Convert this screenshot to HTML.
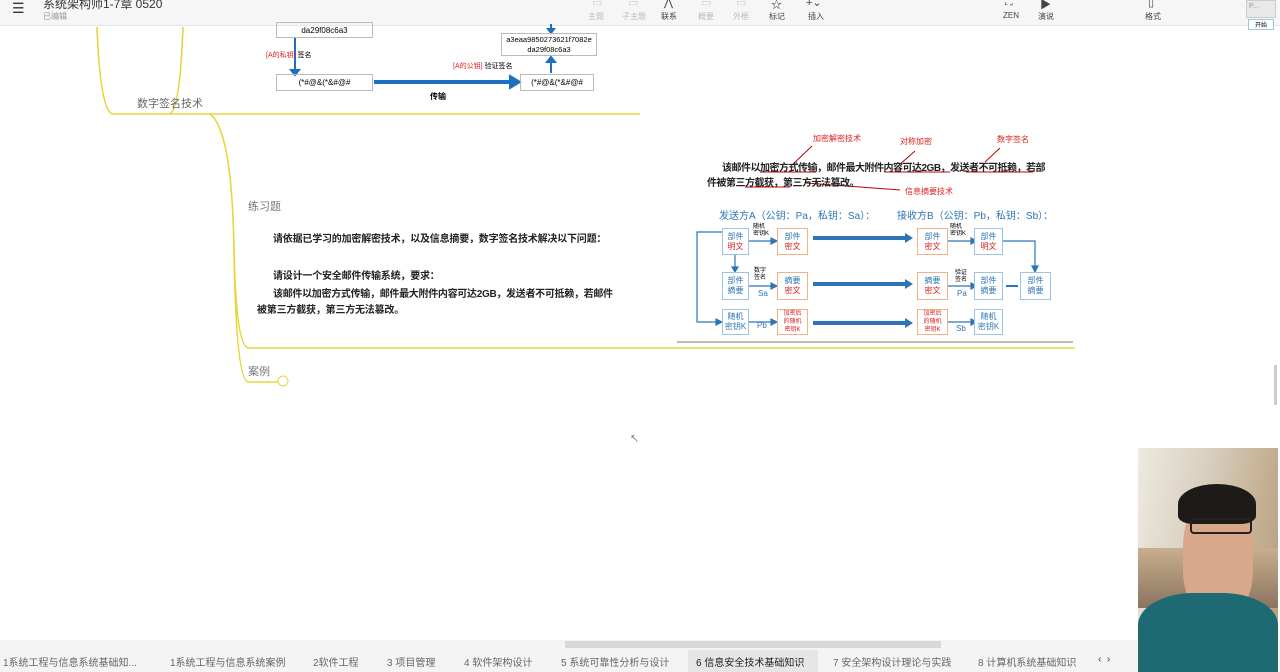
<!DOCTYPE html>
<html><head><meta charset="utf-8"><style>
*{margin:0;padding:0;box-sizing:border-box}
body{width:1280px;height:672px;overflow:hidden;background:#fff;font-family:"Liberation Sans","Noto Sans CJK SC",sans-serif;position:relative}
.a{position:absolute;white-space:nowrap}
.bx{position:absolute;border:1px solid #9dc3e6;background:#fff;font-size:8px;line-height:10px;text-align:center;color:#2e75b6;display:flex;flex-direction:column;justify-content:center}
.bx.o{border-color:#f4b183}
.r{color:#e02020}
.t{font-size:10px;color:#222;font-weight:bold}
.tab{position:absolute;top:654px;font-size:10px;color:#666}
.ic{position:absolute;top:-4px;font-size:11px;color:#444}
</style></head><body>
<div class="a" style="left:0;top:0;width:1280px;height:26px;background:#f6f6f6;border-bottom:1px solid #e6e6e6"></div>
<div class="a" style="left:12px;top:0;font-size:14px;color:#333">☰</div>
<div class="a" style="left:43px;top:-5px;font-size:12px;color:#333">系统架构师1-7章 0520</div>
<div class="a" style="left:43px;top:11px;font-size:8px;color:#999">已编辑</div>
<div class="ic" style="left:592px;color:#ccc">▭</div>
<div class="ic" style="left:628px;color:#ccc">▭</div>
<div class="ic" style="left:664px">⋀</div>
<div class="ic" style="left:701px;color:#ccc">▭</div>
<div class="ic" style="left:736px;color:#ccc">▭</div>
<div class="ic" style="left:771px">☆</div>
<div class="ic" style="left:806px">+⌄</div>
<div class="ic" style="left:1005px">⛶</div>
<div class="ic" style="left:1040px">▶</div>
<div class="ic" style="left:1148px">▯</div>
<div class="a" style="left:588px;top:11px;font-size:8px;color:#bbb">主题</div>
<div class="a" style="left:622px;top:11px;font-size:8px;color:#bbb">子主题</div>
<div class="a" style="left:661px;top:11px;font-size:8px;color:#444">联系</div>
<div class="a" style="left:698px;top:11px;font-size:8px;color:#bbb">概要</div>
<div class="a" style="left:733px;top:11px;font-size:8px;color:#bbb">外框</div>
<div class="a" style="left:769px;top:11px;font-size:8px;color:#444">标记</div>
<div class="a" style="left:808px;top:11px;font-size:8px;color:#444">插入</div>
<div class="a" style="left:1003px;top:11px;font-size:8px;color:#444">ZEN</div>
<div class="a" style="left:1038px;top:11px;font-size:8px;color:#444">演说</div>
<div class="a" style="left:1145px;top:11px;font-size:8px;color:#444">格式</div>
<div class="a" style="left:1246px;top:0;width:30px;height:18px;background:#e8e8e8;border:1px solid #ccc;font-size:7px;color:#999;padding:2px">P...</div>
<div class="a" style="left:1248px;top:19px;width:26px;height:11px;background:#fff;border:1px solid #9cc;font-size:6px;text-align:center">开始</div>

<svg class="a" style="left:0;top:0" width="1280" height="672">
<g fill="none" stroke="#e8d53a" stroke-width="1.6">
<path d="M97 27 Q100 108 112 114 L640 114"/>
<path d="M183 27 Q180 108 170 114"/>
<path d="M210 114 Q232 130 234 250 Q236 345 248 348 L1075 348"/>
<path d="M234 250 Q236 380 248 382 L278 382"/>
</g>
<circle cx="283" cy="381" r="5" fill="#fff" stroke="#e8d53a"/>
<g stroke="#1f6fc0" stroke-width="2" fill="#1f6fc0">
<line x1="295" y1="38" x2="295" y2="70"/><path d="M291 70 L299 70 L295 75Z"/>
<line x1="551" y1="73" x2="551" y2="62"/><path d="M547 62 L555 62 L551 57Z"/>
<line x1="551" y1="24" x2="551" y2="30"/><path d="M548 29 L554 29 L551 33Z"/>
<line x1="374" y1="82" x2="512" y2="82" stroke-width="4"/><path d="M510 76 L520 82 L510 88Z"/>
</g>
<g stroke="#2e75b6" fill="#2e75b6" stroke-width="1.2">
<path d="M722 232 L697 232 L697 322 L716 322" fill="none"/><path d="M716 319 L722 322 L716 325Z"/>
<line x1="735" y1="255" x2="735" y2="268"/><path d="M732 267 L738 267 L735 272Z"/>
<line x1="748" y1="241" x2="772" y2="241"/><path d="M771 238 L777 241 L771 244Z"/>
<line x1="748" y1="286" x2="772" y2="286"/><path d="M771 283 L777 286 L771 289Z"/>
<line x1="748" y1="322" x2="772" y2="322"/><path d="M771 319 L777 322 L771 325Z"/>
<line x1="948" y1="241" x2="972" y2="241"/><path d="M971 238 L977 241 L971 244Z"/>
<line x1="948" y1="286" x2="972" y2="286"/><path d="M971 283 L977 286 L971 289Z"/>
<line x1="948" y1="322" x2="972" y2="322"/><path d="M971 319 L977 322 L971 325Z"/>
<path d="M1003 241 L1035 241 L1035 267" fill="none"/><path d="M1032 266 L1038 266 L1035 272Z"/>
<path d="M1006 286 L1018 286" stroke-width="2"/>
</g>
<g stroke="#2e75b6" stroke-width="4" fill="#2e75b6">
<line x1="813" y1="238" x2="906" y2="238"/><path d="M905 233 L913 238 L905 243Z" stroke="none"/>
<line x1="813" y1="284" x2="906" y2="284"/><path d="M905 279 L913 284 L905 289Z" stroke="none"/>
<line x1="813" y1="323" x2="906" y2="323"/><path d="M905 318 L913 323 L905 328Z" stroke="none"/>
</g>
<g stroke="#c00000" stroke-width="1" fill="#c00000">
<path d="M790 167 L812 146"/><path d="M898 166 L915 151"/><path d="M985 162 L1000 148"/><path d="M806 183 L900 190"/>
<line x1="760" y1="172" x2="816" y2="172"/><line x1="884" y1="172" x2="950" y2="172"/><line x1="966" y1="172" x2="1033" y2="172"/><line x1="745" y1="187" x2="790" y2="187"/>
</g>
<line x1="677" y1="342" x2="1073" y2="342" stroke="#777" stroke-width="1"/>
</svg>

<div class="a" style="left:276px;top:22px;width:97px;height:16px;border:1px solid #bbb;font-size:8px;text-align:center;line-height:15px">da29f08c6a3</div>
<div class="a" style="left:266px;top:50px;font-size:7px"><span class="r">[A的私钥]</span> 签名</div>
<div class="a" style="left:276px;top:74px;width:97px;height:17px;border:1px solid #bbb;font-size:8px;text-align:center;line-height:16px">(*#@&(*&#@#</div>
<div class="a" style="left:520px;top:74px;width:74px;height:17px;border:1px solid #bbb;font-size:8px;text-align:center;line-height:16px">(*#@&(*&#@#</div>
<div class="a" style="left:430px;top:91px;font-size:8px;font-weight:bold">传输</div>
<div class="a" style="left:501px;top:33px;width:96px;height:23px;border:1px solid #bbb;font-size:7.5px;text-align:center;line-height:10px;padding-top:1px">a3eaa9850273621f7082e<br>da29f08c6a3</div>
<div class="a" style="left:453px;top:61px;font-size:7px"><span class="r">[A的公钥]</span> 验证签名</div>
<div class="a" style="left:137px;top:95px;font-size:11px;color:#666">数字签名技术</div>
<div class="a" style="left:248px;top:198px;font-size:11px;color:#777">练习题</div>
<div class="a" style="left:248px;top:363px;font-size:11px;color:#777">案例</div>
<div class="a t" style="left:273px;top:230px;letter-spacing:-0.2px">请依据已学习的加密解密技术，以及信息摘要，数字签名技术解决以下问题：</div>
<div class="a t" style="left:273px;top:267px;letter-spacing:-0.2px">请设计一个安全邮件传输系统，要求：</div>
<div class="a t" style="left:273px;top:285px;letter-spacing:-0.3px">该邮件以加密方式传输，邮件最大附件内容可达2GB，发送者不可抵赖，若邮件</div>
<div class="a t" style="left:257px;top:301px;letter-spacing:-0.2px">被第三方截获，第三方无法篡改。</div>

<div class="a r" style="left:813px;top:133px;font-size:8px">加密解密技术</div>
<div class="a r" style="left:900px;top:136px;font-size:8px">对称加密</div>
<div class="a r" style="left:997px;top:134px;font-size:8px">数字签名</div>
<div class="a r" style="left:905px;top:186px;font-size:8px">信息摘要技术</div>
<div class="a t" style="left:722px;top:159px;letter-spacing:-0.5px">该邮件以加密方式传输，邮件最大附件内容可达2GB，发送者不可抵赖，若部</div>
<div class="a t" style="left:707px;top:174px;letter-spacing:-0.5px">件被第三方截获，第三方无法篡改。</div>
<div class="a" style="left:719px;top:207px;font-size:10px;color:#2e75b6">发送方A（公钥：Pa，私钥：Sa）：</div>
<div class="a" style="left:897px;top:207px;font-size:10px;color:#2e75b6">接收方B（公钥：Pb，私钥：Sb）：</div>

<div class="bx" style="left:722px;top:228px;width:27px;height:27px">部件<br><span class="r">明文</span></div>
<div class="bx o" style="left:777px;top:228px;width:31px;height:27px">部件<br><span class="r">密文</span></div>
<div class="bx o" style="left:917px;top:228px;width:31px;height:27px">部件<br><span class="r">密文</span></div>
<div class="bx" style="left:974px;top:228px;width:29px;height:27px">部件<br><span class="r">明文</span></div>
<div class="bx" style="left:722px;top:272px;width:27px;height:28px">部件<br>摘要</div>
<div class="bx o" style="left:777px;top:272px;width:31px;height:28px">摘要<br><span class="r">密文</span></div>
<div class="bx o" style="left:917px;top:272px;width:31px;height:28px">摘要<br><span class="r">密文</span></div>
<div class="bx" style="left:974px;top:272px;width:29px;height:28px">部件<br>摘要</div>
<div class="bx" style="left:1020px;top:272px;width:31px;height:28px">部件<br>摘要</div>
<div class="bx" style="left:722px;top:309px;width:27px;height:26px">随机<br>密钥K</div>
<div class="bx o" style="left:777px;top:309px;width:31px;height:26px;font-size:6px;line-height:8px"><span class="r">加密后<br>的随机<br>密钥K</span></div>
<div class="bx o" style="left:917px;top:309px;width:31px;height:26px;font-size:6px;line-height:8px"><span class="r">加密后<br>的随机<br>密钥K</span></div>
<div class="bx" style="left:974px;top:309px;width:29px;height:26px">随机<br>密钥K</div>
<div class="a" style="left:753px;top:224px;font-size:6px;line-height:7px">随机<br>密钥K</div>
<div class="a" style="left:950px;top:224px;font-size:6px;line-height:7px">随机<br>密钥K</div>
<div class="a" style="left:754px;top:268px;font-size:6px;line-height:7px">数字<br>签名</div>
<div class="a" style="left:955px;top:270px;font-size:6px;line-height:7px">验证<br>签名</div>
<div class="a" style="left:758px;top:289px;font-size:8px;color:#2e75b6">Sa</div>
<div class="a" style="left:957px;top:289px;font-size:8px;color:#2e75b6">Pa</div>
<div class="a" style="left:757px;top:321px;font-size:8px;color:#2e75b6">Pb</div>
<div class="a" style="left:956px;top:324px;font-size:8px;color:#2e75b6">Sb</div>

<div class="a" style="left:630px;top:432px;font-size:9px;color:#555">↖</div>
<div class="a" style="left:1274px;top:365px;width:3px;height:40px;background:#ccc"></div>
<div class="a" style="left:0;top:640px;width:1280px;height:32px;background:#f4f4f4"></div>
<div class="a" style="left:565px;top:641px;width:376px;height:7px;background:#d8d8d8"></div>
<div class="a" style="left:688px;top:650px;width:130px;height:22px;background:#e6e6e6"></div>
<div class="tab" style="left:3px">1系统工程与信息系统基础知...</div>
<div class="tab" style="left:170px">1系统工程与信息系统案例</div>
<div class="tab" style="left:313px">2软件工程</div>
<div class="tab" style="left:387px">3 项目管理</div>
<div class="tab" style="left:464px">4 软件架构设计</div>
<div class="tab" style="left:561px">5 系统可靠性分析与设计</div>
<div class="tab" style="left:696px;color:#222">6 信息安全技术基础知识</div>
<div class="tab" style="left:833px">7 安全架构设计理论与实践</div>
<div class="tab" style="left:978px">8 计算机系统基础知识</div>
<div class="tab" style="left:1098px;color:#333">‹ &nbsp;›</div>
<div class="a" style="left:1138px;top:448px;width:140px;height:224px;background:linear-gradient(100deg,#eeeae0 0%,#d8cfbf 40%,#c8b398 70%,#b39a7b 100%);overflow:hidden">
 <div class="a" style="left:0;top:100px;width:140px;height:60px;background:linear-gradient(#c9ae8e,#8a7460)"></div>
 <div class="a" style="left:45px;top:50px;width:70px;height:120px;border-radius:40%;background:#d9a88a"></div>
 <div class="a" style="left:40px;top:36px;width:78px;height:40px;border-radius:50% 50% 20% 20%;background:#1e1a18"></div>
 <div class="a" style="left:52px;top:70px;width:62px;height:16px;border:2px solid #222;border-radius:4px"></div>
 <div class="a" style="left:0;top:145px;width:140px;height:80px;border-radius:40% 40% 0 0;background:#1d6a73"></div>
</div>
</body></html>
